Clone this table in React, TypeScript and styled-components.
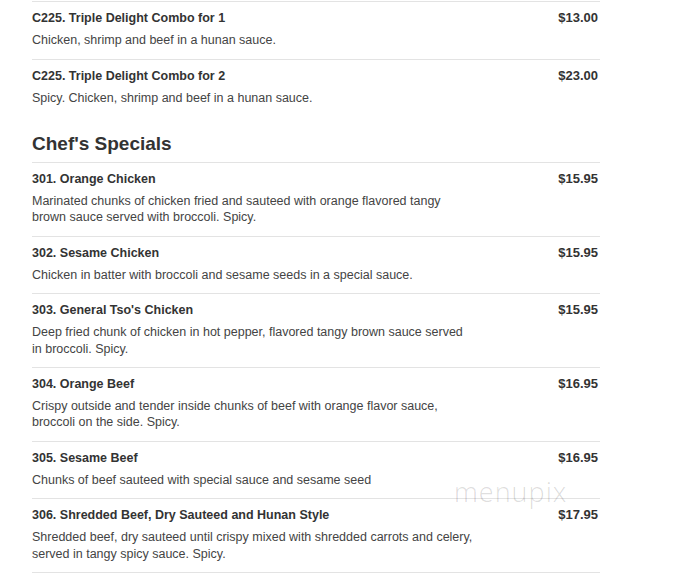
import React from "react";
import styled, { createGlobalStyle } from "styled-components";

const Global = createGlobalStyle`
  html, body { margin: 0; padding: 0; background: #fff; }
  body { font-family: "Liberation Sans", Arial, Helvetica, sans-serif; color: #333; }
`;

const Page = styled.div`
  position: relative;
  width: 568px;
  padding: 1px 0 0 32px;
`;

const SectionTitle = styled.h2`
  margin: 17px 0 7px;
  font-size: 19px;
  line-height: 22px;
  font-weight: bold;
  color: #333;
`;

const List = styled.div<{ $closed?: boolean }>`
  display: flex;
  flex-direction: column;
  border-bottom: ${(p) => (p.$closed ? "1px solid #e3e3e3" : "none")};
`;

const Item = styled.div`
  display: grid;
  grid-template-columns: 1fr auto;
  column-gap: 16px;
  border-top: 1px solid #e3e3e3;
  padding: 8px 2px 10.25px 0;
`;

const Name = styled.div`
  font-size: 12.5px;
  line-height: 16px;
  font-weight: bold;
  color: #333;
`;

const Price = styled.div`
  font-size: 13px;
  line-height: 16px;
  font-weight: bold;
  color: #333;
  text-align: right;
`;

const Desc = styled.div`
  grid-column: 1 / 2;
  margin-top: 6px;
  max-width: 442px;
  font-size: 12.5px;
  line-height: 16.25px;
  color: #444;
`;

const Watermark = styled.div`
  position: absolute;
  left: 454px;
  top: 473px;
  font-family: "Open Sans", "DejaVu Sans", sans-serif;
  font-weight: 300;
  font-size: 27px;
  letter-spacing: 1px;
  color: rgba(0, 0, 0, 0.14);
  pointer-events: none;
`;

type Dish = { name: string; price: string; desc: string };

const combos: Dish[] = [
  { name: "C225. Triple Delight Combo for 1", price: "$13.00", desc: "Chicken, shrimp and beef in a hunan sauce." },
  { name: "C225. Triple Delight Combo for 2", price: "$23.00", desc: "Spicy. Chicken, shrimp and beef in a hunan sauce." },
];

const specials: Dish[] = [
  {
    name: "301. Orange Chicken",
    price: "$15.95",
    desc: "Marinated chunks of chicken fried and sauteed with orange flavored tangy brown sauce served with broccoli. Spicy.",
  },
  { name: "302. Sesame Chicken", price: "$15.95", desc: "Chicken in batter with broccoli and sesame seeds in a special sauce." },
  {
    name: "303. General Tso's Chicken",
    price: "$15.95",
    desc: "Deep fried chunk of chicken in hot pepper, flavored tangy brown sauce served in broccoli. Spicy.",
  },
  {
    name: "304. Orange Beef",
    price: "$16.95",
    desc: "Crispy outside and tender inside chunks of beef with orange flavor sauce, broccoli on the side. Spicy.",
  },
  { name: "305. Sesame Beef", price: "$16.95", desc: "Chunks of beef sauteed with special sauce and sesame seed" },
  {
    name: "306. Shredded Beef, Dry Sauteed and Hunan Style",
    price: "$17.95",
    desc: "Shredded beef, dry sauteed until crispy mixed with shredded carrots and celery, served in tangy spicy sauce. Spicy.",
  },
];

const MenuItem = ({ d }: { d: Dish }) => (
  <Item>
    <Name>{d.name}</Name>
    <Price>{d.price}</Price>
    <Desc>{d.desc}</Desc>
  </Item>
);

export default function App() {
  return (
    <Page>
      <Global />
      <List>
        {combos.map((d) => (
          <MenuItem key={d.name} d={d} />
        ))}
      </List>
      <SectionTitle>Chef's Specials</SectionTitle>
      <List $closed>
        {specials.map((d) => (
          <MenuItem key={d.name} d={d} />
        ))}
      </List>
      <Watermark>menupix</Watermark>
    </Page>
  );
}
